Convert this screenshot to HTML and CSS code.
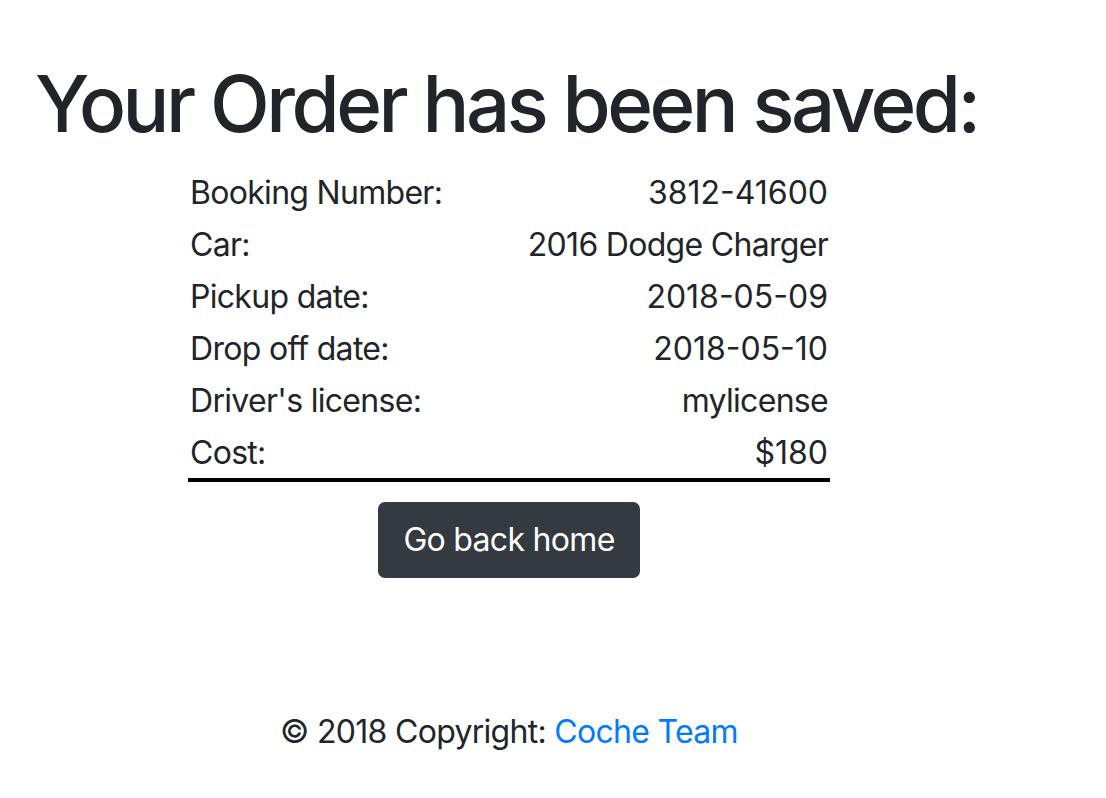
FILE: index.html
```html
<!DOCTYPE html>
<html lang="en">
<head>
<meta charset="utf-8">
<title>Order saved</title>
<link rel="stylesheet" href="styles.css">
</head>
<body>
<div class="page">
  <h1 class="title">Your Order has been saved:</h1>
  <div class="summary">
    <div class="row"><span>Booking Number:</span><span class="num">3812-41600</span></div>
    <div class="row"><span>Car:</span><span>2016 Dodge Charger</span></div>
    <div class="row"><span>Pickup date:</span><span class="num">2018-05-09</span></div>
    <div class="row"><span>Drop off date:</span><span class="num">2018-05-10</span></div>
    <div class="row"><span>Driver's license:</span><span>mylicense</span></div>
    <div class="row row-last"><span>Cost:</span><span class="num">$180</span></div>
  </div>
  <a class="btn" href="#">Go back home</a>
  <footer class="footer">© 2018 Copyright: <a class="link" href="#">Coche Team</a></footer>
</div>
</body>
</html>
```
FILE: styles.css
```css
html, body {
  margin: 0;
  padding: 0;
  background: #fff;
}
body {
  font-family: Inter, "Noto Sans", "Liberation Sans", sans-serif;
  color: #212529;
  font-size: 32px;
  line-height: 1.5;
  letter-spacing: -0.7px;
}
.page {
  width: 1018px;
  display: flex;
  flex-direction: column;
  align-items: center;
}
.title {
  align-self: flex-start;
  white-space: nowrap;
  margin: 56px 0 15px 35px;
  font-size: 78px;
  font-weight: 500;
  line-height: 96px;
  letter-spacing: -3.5px;
}
.summary {
  width: 642px;
  display: flex;
  flex-direction: column;
}
.row {
  display: flex;
  justify-content: space-between;
  height: 52px;
  align-items: center;
  padding: 0 2px;
}
.num {
  letter-spacing: 0;
}
.row-last {
  height: 51px;
  border-bottom: 4px solid #000;
}
.btn {
  margin-top: 20px;
  display: inline-flex;
  align-items: center;
  justify-content: center;
  width: 262px;
  height: 76px;
  box-sizing: border-box;
  background: #343a40;
  color: #fff;
  text-decoration: none;
  border-radius: 7px;
  font-size: 32px;
}
.footer {
  margin-top: 130px;
  line-height: 48px;
}
.link {
  color: #007bff;
  text-decoration: none;
}
```
